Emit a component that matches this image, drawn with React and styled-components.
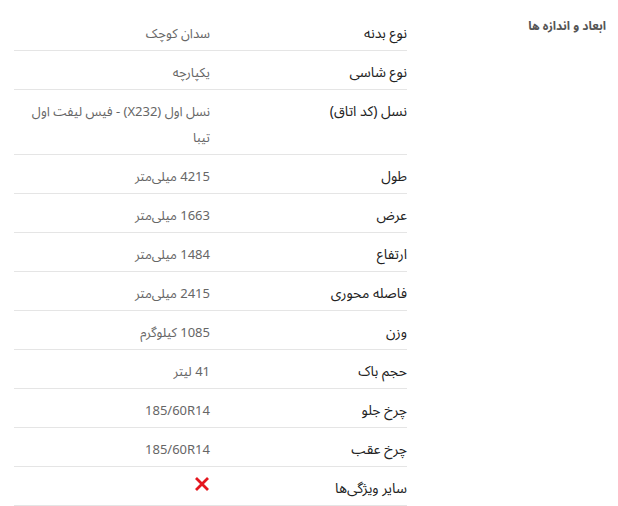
import React from "react";
import styled, { createGlobalStyle } from "styled-components";

const GlobalStyle = createGlobalStyle`
  html, body {
    margin: 0;
    padding: 0;
    background: #ffffff;
  }
  body {
    font-family: "Noto Sans Arabic", "Vazirmatn", "DejaVu Sans", sans-serif;
    direction: rtl;
  }
`;

const Page = styled.div`
  display: flex;
  flex-direction: row;
  direction: rtl;
  width: 618px;
  padding-top: 12px;
  box-sizing: border-box;
`;

const Sidebar = styled.div`
  width: 211px;
  flex: 0 0 211px;
  padding-right: 12px;
  padding-top: 5px;
  box-sizing: border-box;
`;

const SectionTitle = styled.h3`
  margin: 0;
  font-size: 12px;
  font-weight: 700;
  line-height: 20px;
  color: #555555;
`;

const Table = styled.div`
  width: 393px;
  flex: 0 0 393px;
  display: flex;
  flex-direction: column;
`;

const Row = styled.div`
  display: grid;
  grid-template-columns: 197px 196px;
  padding: 9px 0 3px;
  border-bottom: 1px solid #e5e5e5;
  line-height: 26px;
`;

const Label = styled.div`
  color: #222222;
  font-size: 14px;
`;

const Value = styled.div`
  color: #666666;
  font-size: 13px;
  display: flex;
  align-items: flex-start;
  min-height: 26px;
`;

const CrossSvg = styled.svg`
  display: block;
  margin-top: 0;
`;

const CrossIcon = () => (
  <CrossSvg width="16" height="16" viewBox="0 0 16 16" aria-hidden="true">
    <path
      d="M2 2 L14 14 M14 2 L2 14"
      stroke="#e4161e"
      strokeWidth="2.8"
      strokeLinecap="butt"
      fill="none"
    />
  </CrossSvg>
);

const specs = [
  ["نوع بدنه", "سدان کوچک"],
  ["نوع شاسی", "یکپارچه"],
  ["نسل (کد اتاق)", "نسل اول (X232) - فیس لیفت اول تیبا"],
  ["طول", "4215 میلی‌متر"],
  ["عرض", "1663 میلی‌متر"],
  ["ارتفاع", "1484 میلی‌متر"],
  ["فاصله محوری", "2415 میلی‌متر"],
  ["وزن", "1085 کیلوگرم"],
  ["حجم باک", "41 لیتر"],
  ["چرخ جلو", "185/60R14"],
  ["چرخ عقب", "185/60R14"],
  ["سایر ویژگی‌ها", null],
];

export default function App() {
  return (
    <>
      <GlobalStyle />
      <Page>
        <Sidebar>
          <SectionTitle>ابعاد و اندازه ها</SectionTitle>
        </Sidebar>
        <Table>
          {specs.map(([label, value]) => (
            <Row key={label}>
              <Label>{label}</Label>
              <Value>{value === null ? <CrossIcon /> : value}</Value>
            </Row>
          ))}
        </Table>
      </Page>
    </>
  );
}
